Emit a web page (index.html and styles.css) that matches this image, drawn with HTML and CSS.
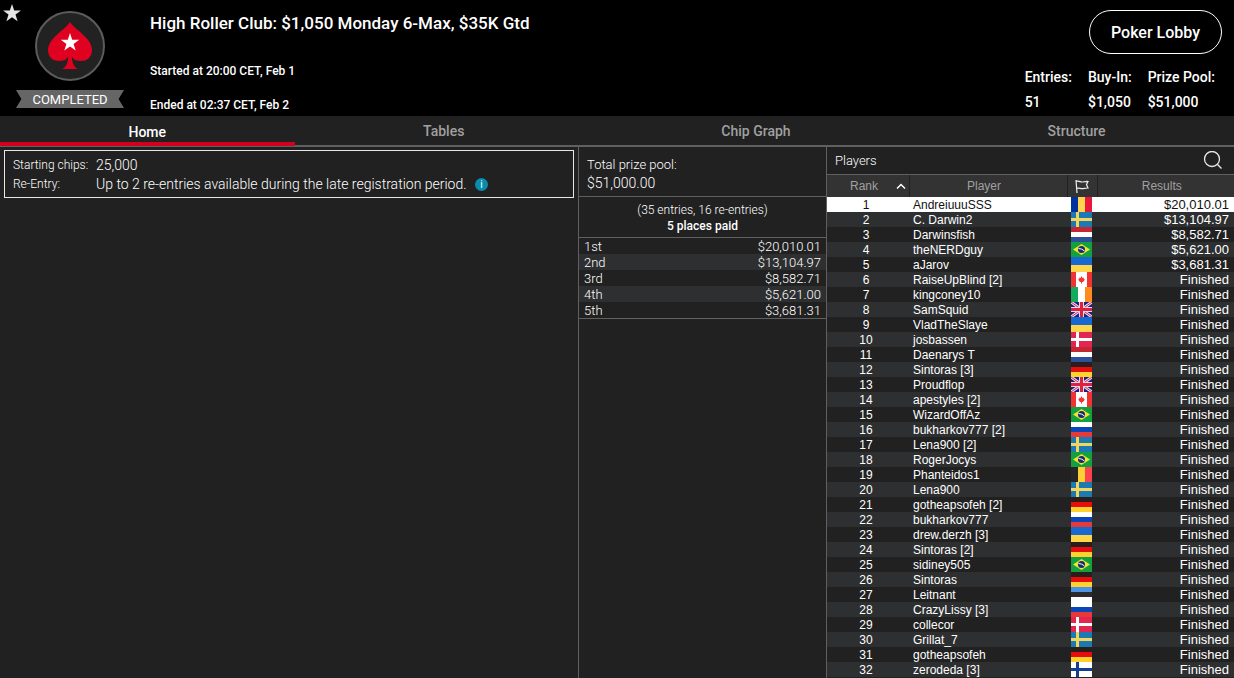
FILE: index.html
```html
<!DOCTYPE html>
<html lang="en">
<head>
  <meta charset="UTF-8">
  <meta name="viewport" content="width=device-width, initial-scale=1.0">
  <title>Tournament Lobby</title>
  <link rel="stylesheet" href="styles.css">
</head>
<body>

  <!-- flags -->
  <svg class="sprite" aria-hidden="true">
    <symbol id="ro" viewBox="0 0 21 15"><path fill="#00319c" d="M0 0h7v15H0z"/><path fill="#ffd34d" d="M7 0h7v15H7z"/><path fill="#e8173c" d="M14 0h7v15h-7z"/></symbol>
    <symbol id="se" viewBox="0 0 21 15"><path fill="#1b7ab3" d="M0 0h21v15H0z"/><path fill="#f2d55c" d="M5 0h3v15H5zM0 6h21v3H0z"/></symbol>
    <symbol id="nl" viewBox="0 0 21 15"><path fill="#c42733" d="M0 0h21v5H0z"/><path fill="#fff" d="M0 5h21v5H0z"/><path fill="#2c519c" d="M0 10h21v5H0z"/></symbol>
    <symbol id="br" viewBox="0 0 21 15"><path fill="#12a13c" d="M0 0h21v15H0z"/><path fill="#f5e03a" d="M10.500 2l8.500 5.500-8.500 5.500L2 7.500z"/><circle cx="10.500" cy="7.500" r="3.500" fill="#14306b"/><path stroke="#fff" d="M7.500 6.500q3.500 0 6 2.500" fill="none"/></symbol>
    <symbol id="ua" viewBox="0 0 21 15"><path fill="#1768d1" d="M0 0h21v8H0z"/><path fill="#ffd54a" d="M0 8h21v7H0z"/></symbol>
    <symbol id="ca" viewBox="0 0 21 15"><path fill="#fff" d="M0 0h21v15H0z"/><path fill="#f23333" d="M0 0h5v15H0zM16 0h5v15h-5zM10.500 4l1 2 1.500-.5-.3 1.500 1.300.5-2 2.500h-1v1.500h-1V10H9L7 7.500 8.300 7 8 5.500l1.500.5z"/></symbol>
    <symbol id="ie" viewBox="0 0 21 15"><path fill="#14ab5c" d="M0 0h7v15H0z"/><path fill="#fff" d="M7 0h7v15H7z"/><path fill="#ff8a1f" d="M14 0h7v15h-7z"/></symbol>
    <symbol id="gb" viewBox="0 0 21 15"><path fill="#1b1f80" d="M0 0h21v15H0z"/><path stroke="#e3dcf0" stroke-width="3" d="M0 0l21 15M21 0L0 15"/><path stroke="#d8294c" d="M0 0l21 15M21 0L0 15"/><path fill="#f0d5e2" d="M8 0h5v15H8zM0 5h21v5H0z"/><path fill="#dd2140" d="M9 0h3v15H9zM0 6h21v3H0z"/></symbol>
    <symbol id="dk" viewBox="0 0 21 15"><path fill="#e32650" d="M0 0h21v15H0z"/><path fill="#fff" d="M5 0h3v15H5zM0 6h21v3H0z"/></symbol>
    <symbol id="de" viewBox="0 0 21 15"><path fill="#2b1d1b" d="M0 0h21v5H0z"/><path fill="#e60d0d" d="M0 5h21v5H0z"/><path fill="#ffd22e" d="M0 10h21v5H0z"/></symbol>
    <symbol id="ru" viewBox="0 0 21 15"><path fill="#fff" d="M0 0h21v5H0z"/><path fill="#0b46b8" d="M0 5h21v5H0z"/><path fill="#e53a38" d="M0 10h21v5H0z"/></symbol>
    <symbol id="be" viewBox="0 0 21 15"><path fill="#262626" d="M0 0h7v15H0z"/><path fill="#ffd034" d="M7 0h7v15H7z"/><path fill="#fa4250" d="M14 0h7v15h-7z"/></symbol>
    <symbol id="ee" viewBox="0 0 21 15"><path fill="#4b94e6" d="M0 0h21v5H0z"/><path fill="#2a2a2a" d="M0 5h21v5H0z"/><path fill="#fff" d="M0 10h21v5H0z"/></symbol>
    <symbol id="fi" viewBox="0 0 21 15"><path fill="#fff" d="M0 0h21v15H0z"/><path fill="#123f91" d="M5 0h3v15H5zM0 6h21v3H0z"/></symbol>
  </svg>

  <header class="header">
    <button class="favorite" aria-label="Favorite">
      <svg width="18" height="18" viewBox="0 0 18 18"><path fill="#e4e4e4" d="M9 0l2.200 6.500H18l-5.500 4.100 2.100 6.700L9 13.200l-5.600 4.100 2.100-6.700L0 6.500h6.800z"/></svg>
    </button>
    <div class="brand">
      <svg width="70" height="70" viewBox="0 0 70 70">
        <circle cx="35" cy="35" r="34" fill="#222" stroke="#5c5c5c" stroke-width="2"/>
        <path fill="#e0001f" d="M35 11C39 18 57 27 57 39c0 8-6 11-11 11-4 0-7-1-9-4 0 6 2 10 6 12H27c4-2 6-6 6-12-2 3-5 4-9 4-5 0-11-3-11-11C13 27 31 18 35 11z"/>
        <path fill="#fff" d="M35 22l2.200 6.700h7l-5.600 4.200 2.100 6.700-5.700-4.100-5.700 4.100 2.100-6.700-5.600-4.200h7z"/>
      </svg>
      <div class="status">COMPLETED</div>
    </div>
    <div class="info">
      <h1>High Roller Club: $1,050 Monday 6-Max, $35K Gtd</h1>
      <p>Started at 20:00 CET, Feb 1</p>
      <p>Ended at 02:37 CET, Feb 2</p>
    </div>
    <div class="summary">
      <button class="lobby">Poker Lobby</button>
      <dl>
        <div><dt>Entries:</dt><dd>51</dd></div>
        <div><dt>Buy-In:</dt><dd>$1,050</dd></div>
        <div><dt>Prize Pool:</dt><dd>$51,000</dd></div>
      </dl>
    </div>
  </header>

  <nav class="tabs">
    <a class="active" href="#home">Home</a>
    <a href="#tables">Tables</a>
    <a href="#chips">Chip Graph</a>
    <a href="#structure">Structure</a>
  </nav>

  <main class="content">
    <section class="details">
      <dl>
        <dt>Starting chips:</dt>
        <dd>25,000</dd>
        <dt>Re-Entry:</dt>
        <dd>Up to 2 re-entries available during the late registration period. <button class="tip" aria-label="Re-entry info">i</button></dd>
      </dl>
    </section>

    <section class="prizes">
      <div class="pool">
        <p>Total prize pool:</p>
        <p class="amount">$51,000.00</p>
      </div>
      <div class="places">
        <p>(35 entries, 16 re-entries)</p>
        <p><strong>5 places paid</strong></p>
      </div>
      <table class="payouts">
        <tr><td>1st</td><td>$20,010.01</td></tr>
        <tr><td>2nd</td><td>$13,104.97</td></tr>
        <tr><td>3rd</td><td>$8,582.71</td></tr>
        <tr><td>4th</td><td>$5,621.00</td></tr>
        <tr><td>5th</td><td>$3,681.31</td></tr>
      </table>
    </section>

    <section class="players">
      <div class="playersTitle">
        <h2>Players</h2>
        <button class="search" aria-label="Search players">
          <svg width="20" height="20" viewBox="0 0 20 20" fill="none" stroke="#e8e8e8" stroke-width="1.300"><circle cx="9" cy="8" r="7.500"/><path d="M14.300 13.300l4.200 4.200"/></svg>
        </button>
      </div>
      <table class="ranking">
        <thead>
          <tr>
            <th class="rank"><span>Rank</span><svg width="10" height="6" viewBox="0 0 10 6" fill="none" stroke="#fff" stroke-width="1.500"><path d="M1 5.500l4-4 4 4"/></svg></th>
            <th class="name">Player</th>
            <th class="country"><svg width="14" height="13" viewBox="0 0 14 13" fill="none" stroke="#eee" stroke-width="1.200"><path d="M1 0l1 13M1 1.500c3-1 4 .5 6 .5s3-.7 6-.5l-1.500 3L13 8c-3 0-4 .7-6 .7S4 7.500 1.500 8.500"/></svg></th>
            <th class="result">Results</th>
          </tr>
        </thead>
        <tbody>
          <tr class="selected"><td>1</td><td>AndreiuuuSSS</td><td><svg class="flag"><use href="#ro"/></svg></td><td>$20,010.01</td></tr>
          <tr><td>2</td><td>C. Darwin2</td><td><svg class="flag"><use href="#se"/></svg></td><td>$13,104.97</td></tr>
          <tr><td>3</td><td>Darwinsfish</td><td><svg class="flag"><use href="#nl"/></svg></td><td>$8,582.71</td></tr>
          <tr><td>4</td><td>theNERDguy</td><td><svg class="flag"><use href="#br"/></svg></td><td>$5,621.00</td></tr>
          <tr><td>5</td><td>aJarov</td><td><svg class="flag"><use href="#ua"/></svg></td><td>$3,681.31</td></tr>
          <tr><td>6</td><td>RaiseUpBlind [2]</td><td><svg class="flag"><use href="#ca"/></svg></td><td>Finished</td></tr>
          <tr><td>7</td><td>kingconey10</td><td><svg class="flag"><use href="#ie"/></svg></td><td>Finished</td></tr>
          <tr><td>8</td><td>SamSquid</td><td><svg class="flag"><use href="#gb"/></svg></td><td>Finished</td></tr>
          <tr><td>9</td><td>VladTheSlaye</td><td><svg class="flag"><use href="#ua"/></svg></td><td>Finished</td></tr>
          <tr><td>10</td><td>josbassen</td><td><svg class="flag"><use href="#dk"/></svg></td><td>Finished</td></tr>
          <tr><td>11</td><td>Daenarys T</td><td><svg class="flag"><use href="#nl"/></svg></td><td>Finished</td></tr>
          <tr><td>12</td><td>Sintoras [3]</td><td><svg class="flag"><use href="#de"/></svg></td><td>Finished</td></tr>
          <tr><td>13</td><td>Proudflop</td><td><svg class="flag"><use href="#gb"/></svg></td><td>Finished</td></tr>
          <tr><td>14</td><td>apestyles [2]</td><td><svg class="flag"><use href="#ca"/></svg></td><td>Finished</td></tr>
          <tr><td>15</td><td>WizardOffAz</td><td><svg class="flag"><use href="#br"/></svg></td><td>Finished</td></tr>
          <tr><td>16</td><td>bukharkov777 [2]</td><td><svg class="flag"><use href="#ru"/></svg></td><td>Finished</td></tr>
          <tr><td>17</td><td>Lena900 [2]</td><td><svg class="flag"><use href="#se"/></svg></td><td>Finished</td></tr>
          <tr><td>18</td><td>RogerJocys</td><td><svg class="flag"><use href="#br"/></svg></td><td>Finished</td></tr>
          <tr><td>19</td><td>Phanteidos1</td><td><svg class="flag"><use href="#be"/></svg></td><td>Finished</td></tr>
          <tr><td>20</td><td>Lena900</td><td><svg class="flag"><use href="#se"/></svg></td><td>Finished</td></tr>
          <tr><td>21</td><td>gotheapsofeh [2]</td><td><svg class="flag"><use href="#de"/></svg></td><td>Finished</td></tr>
          <tr><td>22</td><td>bukharkov777</td><td><svg class="flag"><use href="#ru"/></svg></td><td>Finished</td></tr>
          <tr><td>23</td><td>drew.derzh [3]</td><td><svg class="flag"><use href="#ua"/></svg></td><td>Finished</td></tr>
          <tr><td>24</td><td>Sintoras [2]</td><td><svg class="flag"><use href="#de"/></svg></td><td>Finished</td></tr>
          <tr><td>25</td><td>sidiney505</td><td><svg class="flag"><use href="#br"/></svg></td><td>Finished</td></tr>
          <tr><td>26</td><td>Sintoras</td><td><svg class="flag"><use href="#de"/></svg></td><td>Finished</td></tr>
          <tr><td>27</td><td>Leitnant</td><td><svg class="flag"><use href="#ee"/></svg></td><td>Finished</td></tr>
          <tr><td>28</td><td>CrazyLissy [3]</td><td><svg class="flag"><use href="#ru"/></svg></td><td>Finished</td></tr>
          <tr><td>29</td><td>collecor</td><td><svg class="flag"><use href="#dk"/></svg></td><td>Finished</td></tr>
          <tr><td>30</td><td>Grillat_7</td><td><svg class="flag"><use href="#se"/></svg></td><td>Finished</td></tr>
          <tr><td>31</td><td>gotheapsofeh</td><td><svg class="flag"><use href="#de"/></svg></td><td>Finished</td></tr>
          <tr><td>32</td><td>zerodeda [3]</td><td><svg class="flag"><use href="#fi"/></svg></td><td>Finished</td></tr>
        </tbody>
      </table>
    </section>
  </main>

</body>
</html>
```

FILE: styles.css
```css
* {
  box-sizing: border-box;
}

body {
  display: flex;
  flex-direction: column;
  min-height: 100vh;
  margin: 0;
  background: #212121;
  color: #fff;
  font-family: Roboto, "Liberation Sans", sans-serif;
  font-size: 13px;
  line-height: 16px;
}

h1, h2, p, dl, dd {
  margin: 0;
}

button {
  padding: 0;
  border: 0;
  background: none;
  color: inherit;
  font-family: inherit;
  cursor: pointer;
}

svg {
  display: block;
}

table {
  width: 100%;
  border-collapse: collapse;
}

.sprite {
  position: absolute;
  width: 0;
  height: 0;
}

/* header */
.header {
  display: flex;
  height: 116px;
  background: #000;
  font-weight: 500;
}

.favorite {
  align-self: flex-start;
  width: 16px;
  padding: 4px 0 0 3px;
}

.brand {
  display: flex;
  flex-direction: column;
  align-items: center;
  gap: 9px;
  width: 108px;
  padding-top: 11px;
}

.status {
  width: 108px;
  padding-top: 1px;
  background: #666;
  clip-path: polygon(0 0, 100% 0, 95% 50%, 100% 100%, 0 100%, 5% 50%);
  font-weight: 400;
  line-height: 17px;
  text-align: center;
}

.info {
  flex: 1;
  padding: 13px 0 0 26px;
  font-size: 12px;
}

.info h1 {
  margin-bottom: 30px;
  font-size: 17px;
  font-weight: 500;
  line-height: 20px;
}

.info p + p {
  margin-top: 18px;
}

.summary {
  display: flex;
  flex-direction: column;
  align-items: flex-end;
  gap: 11px;
  padding: 10px 12px 0 0;
}

.lobby {
  width: 133px;
  height: 44px;
  border: 1px solid #fff;
  border-radius: 22px;
  font-size: 16px;
  font-weight: 500;
}

.summary dl {
  display: flex;
  gap: 16px;
  padding-right: 7px;
  font-size: 14px;
  line-height: 25px;
}

/* tabs */
.tabs {
  display: flex;
  height: 31px;
  border-bottom: 2px solid #606060;
}

.tabs a {
  flex: 1 1 auto;
  height: 30px;
  color: #a0a0a0;
  font-size: 14px;
  font-weight: 500;
  line-height: 30px;
  text-align: center;
  text-decoration: none;
}

.tabs .active {
  border-bottom: 4px solid #d2001f;
  color: #fff;
  line-height: 32px;
}

/* content */
.content {
  display: grid;
  flex: 1;
  grid-template-columns: 1fr 248px 408px;
  font-weight: 300;
}

.details {
  padding: 3px 4px;
}

.details dl {
  display: grid;
  grid-template-columns: 83px 1fr;
  padding: 5px 8px 3px;
  border: 1px solid #e8e8e8;
  font-size: 12px;
  line-height: 19px;
}

.details dd {
  font-size: 14px;
}

.tip {
  width: 13px;
  height: 13px;
  margin-left: 5px;
  border-radius: 50%;
  background: #0a8cae;
  font-size: 10px;
  line-height: 13px;
  vertical-align: 1px;
}

.prizes {
  border-left: 1px solid #606060;
}

.pool {
  padding: 9px 8px 4px;
  border-bottom: 1px solid #606060;
  line-height: 18px;
}

.amount {
  font-size: 14px;
}

.places {
  padding: 5px 0 3px;
  border-bottom: 1px solid #606060;
  font-size: 12px;
  text-align: center;
}

.places strong {
  font-weight: 500;
}

.payouts {
  border-bottom: 1px solid #606060;
  line-height: 15px;
}

.payouts td {
  padding: 1px 5px 0;
}

.payouts td:last-child {
  text-align: right;
}

.payouts tr:nth-child(even),
.ranking tbody tr:nth-child(even) {
  background: #2d2f31;
}

.players {
  border-left: 1px solid #606060;
}

.playersTitle {
  display: flex;
  align-items: center;
  justify-content: space-between;
  height: 28px;
  padding: 0 11px 0 8px;
  border-bottom: 1px solid #606060;
}

.playersTitle h2 {
  font-size: 13px;
  font-weight: 300;
}

.ranking {
  table-layout: fixed;
  font-family: "Liberation Sans", Arial, sans-serif;
  font-size: 12px;
  font-weight: 400;
  line-height: 14px;
}

.ranking th {
  height: 22px;
  padding: 0;
  border-right: 1px solid #212121;
  background: #333;
  color: #a0a0a0;
  font-weight: 400;
}

.ranking th:last-child {
  border-right: 0;
}

.ranking .rank {
  width: 82px;
  text-align: left;
}

.rank span {
  margin: 0 18px 0 23px;
}

.rank span,
.rank svg {
  display: inline-block;
  vertical-align: middle;
}

.ranking .name {
  padding-right: 8px;
}

.country {
  width: 30px;
}

.country svg {
  margin: 0 auto;
}

.ranking .result {
  width: 137px;
  padding-right: 8px;
}

.ranking td {
  padding: 1px 4px 0;
}

.ranking td:first-child {
  padding-right: 8px;
  text-align: center;
}

.ranking td:nth-child(3) {
  padding-top: 0;
}

.ranking td:last-child {
  padding-right: 5px;
  font-size: 13px;
  text-align: right;
}

.ranking .selected {
  background: #fff;
  color: #111;
}

.flag {
  width: 21px;
  height: 15px;
}
```
